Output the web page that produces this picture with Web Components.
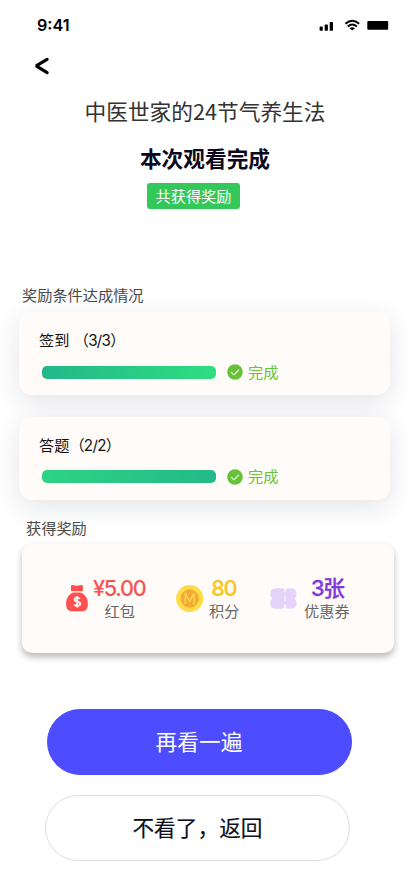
<!DOCTYPE html>
<html lang="zh-CN">
<head>
<meta charset="utf-8">
<title>观看完成</title>
<style>
body{margin:0;background:#fff;font-family:"Inter","Noto Sans CJK SC",sans-serif;font-size:15.2px;color:#111}
</style>
</head>
<body>
<watch-page></watch-page>
<script>
const define = (name, html) => customElements.define(name, class extends HTMLElement {
  constructor() {
    super();
    const t = document.createElement('template');
    t.innerHTML = html;
    this.attachShadow({mode: 'open'}).append(t.content.cloneNode(true));
  }
});

define('status-bar', `
<style>
:host{display:flex;height:50px;box-sizing:border-box;padding:0 19px 0 37px;align-items:center;justify-content:space-between}
.time{font-size:16.2px;font-weight:600;line-height:20px;color:#000}
.icons{display:flex;align-items:center}
svg{display:block}
</style>
<span class="time">9:41</span>
<span class="icons">
<svg width="70" height="14" viewBox="319 18 70 14">
<g fill="#000"><rect x="319.6" y="26.5" width="3.2" height="4.3" rx=".9"/><rect x="324.7" y="24.4" width="3.2" height="6.4" rx=".9"/><rect x="329.7" y="22" width="3.3" height="8.8" rx=".9"/>
<rect x="367.3" y="21" width="20.9" height="8.7" rx="1"/><path d="M349.6 28.2q2.7-1.9 5.4 0l-2.7 2.4z"/></g>
<g fill="none" stroke="#000" stroke-width="2"><path d="M345.4 23.8q6.9-6 13.8 0M347.7 26.5q4.6-3.9 9.2 0"/></g>
</svg></span>`);

define('back-button', `
<style>:host{display:block;height:45px;padding-left:34px}svg{display:block}</style>
<svg width="16" height="32" viewBox="0 0 16 32"><path d="M13.1 9.4 2.2 15.8l10.9 6.8" fill="none" stroke="#000" stroke-width="3.2" stroke-linecap="round" stroke-linejoin="bevel"/></svg>`);

define('page-heading', `
<style>
:host{display:flex;flex-direction:column;align-items:center}
.t{font:400 21.7px/32px "Noto Sans CJK SC",sans-serif;color:#333;padding-left:2px}
.h{font:700 21.7px/32px "Noto Sans CJK SC",sans-serif;color:#0a0920;margin-top:15px;padding-left:2px}
.b{font:400 15.2px/24px "Noto Sans CJK SC",sans-serif;color:#fff;background:#34c759;border-radius:3px;width:93px;height:26px;text-align:center;margin:9px 21px 0 0}
</style>
<div class="t"><slot name="title"></slot></div>
<div class="h"><slot></slot></div>
<div class="b"><slot name="badge"></slot></div>`);

define('section-label', `
<style>:host{display:block;font:400 15.2px/24px "Noto Sans CJK SC",sans-serif;color:#4a4a4a}</style><slot></slot>`);

define('progress-card', `
<style>
:host{display:block;box-sizing:border-box;width:371px;height:83px;margin-left:19px;padding:17px 0 0 20px;background:#fffbf8;border-radius:13px;box-shadow:0 7px 26px rgba(40,50,80,.13)}
.n{line-height:24px;color:#111;white-space:pre;font-size:15.2px}
.r{display:flex;align-items:center;height:24px;margin-top:7px;padding-left:3px;font-family:"Noto Sans CJK SC",sans-serif;color:#67c23a}
.bar{width:173.5px;height:13px;border-radius:5px;background:linear-gradient(90deg,var(--from),var(--to))}
svg{margin:0 5px 0 11.5px}
.r span{line-height:22px;padding-bottom:3px}
</style>
<div class="n"><slot></slot></div>
<div class="r"><div class="bar"></div>
<svg width="16" height="16" viewBox="0 0 16 16"><circle cx="8" cy="8" r="7.8" fill="#67c23a"/><path d="m4.1 8.1 2.8 2.7 5-5" fill="none" stroke="#fff" stroke-width="1.1"/></svg>
<span>完成</span></div>`);

define('reward-item', `
<style>
:host{display:flex;align-items:center}
.c{display:flex;flex-direction:column;align-items:center}
.v{font-size:21.7px;font-weight:500;line-height:24px;letter-spacing:-1.3px;color:var(--c);white-space:nowrap;-webkit-text-stroke:var(--heft,0) var(--c);padding-left:var(--nudge,0)}
.l{font:400 15.2px/20px "Noto Sans CJK SC",sans-serif;color:#666;padding:0 0 2px 1px}
</style>
<slot name="icon"></slot><div class="c"><div class="v"><slot name="value"></slot></div><div class="l"><slot></slot></div></div>`);

define('reward-panel', `
<style>
:host{display:flex;box-sizing:border-box;width:371.5px;height:109px;margin-left:22px;padding:32px 0 0 42.5px;align-items:flex-start;background:#fffbf8;border-radius:10px;box-shadow:0 4px 7px rgba(0,0,0,.28)}
.a{--c:#f65353;width:111px}.b{--c:#f9c61c;width:94.5px;--heft:.2px}.d{--c:#8238dc;--heft:.3px;--nudge:2px}
svg{display:block;flex:none}
</style>
<reward-item class="a">
<svg slot="icon" width="28.5" height="32" viewBox="0 0 28.5 32"><path d="M5.8 4.2Q5.5 1.2 9 2.3q3 .8 6 0 3.3-1 3 1.900l-.3 4H6.200z" fill="#ff5050"/><path d="M8 9.600h7.700c4.500 1.700 7.100 5.900 7.100 11.300 0 5.300-2.400 7.400-6 7.400H7.200c-4 0-6.100-2.200-6.100-7.300 0-5.600 2.600-9.700 6.900-11.400z" fill="#ff5050"/><path d="M14.900 15.800c-.8-1-1.700-1.200-2.800-1.200-1.500 0-2.500.7-2.500 1.900 0 3 5.600 1.300 5.600 4.300 0 1.300-1.100 2.100-2.900 2.100-1.300 0-2.400-.5-3.100-1.300M12.200 13v11.500" fill="none" stroke="#fff" stroke-width="1.8"/></svg>
<span slot="value">¥5.00</span>红包</reward-item>
<reward-item class="b">
<svg slot="icon" width="32.5" height="30" viewBox="0 0 32.5 30"><circle cx="13.7" cy="14.5" r="13.6" fill="#fddc48"/><circle cx="13.7" cy="14.5" r="9.2" fill="#f3ab35"/><path d="M9.3 20V9l4.4 8.4L18.1 9v11" fill="none" stroke="#ffdc56" stroke-width="1.3"/></svg>
<span slot="value">80</span>积分</reward-item>
<reward-item class="d">
<svg slot="icon" width="33" height="28" viewBox="0 0 33 28"><g fill="#e5d3fb" transform="translate(0 -.5)"><rect x=".3" y="4" width="14" height="10.6" rx="4.5"/><rect x=".3" y="13.4" width="14" height="10.6" rx="4.5"/><rect x="2.3" y="9" width="12" height="10"/><rect x="5" y="4" width="9.3" height="20" rx="1.5"/><rect x="15.7" y="4" width="10.8" height="10.6" rx="4.5"/><rect x="15.7" y="13.4" width="10.8" height="10.6" rx="4.5"/><rect x="15.7" y="9" width="8.8" height="10"/><rect x="15.7" y="4" width="6.3" height="20" rx="1.5"/><rect x="14" y="8" width="2" height="3"/><rect x="14" y="16.5" width="2" height="3"/></g></svg>
<span slot="value">3张</span>优惠券</reward-item>`);

define('pill-button', `
<style>
:host{display:block}
button{display:block;box-sizing:border-box;width:305px;height:66px;padding:0 0 3px;border:1px solid var(--line);border-radius:33px;background:var(--fill);color:var(--ink);font:400 21.7px/32px "Noto Sans CJK SC",sans-serif;-webkit-text-stroke:var(--heft) var(--ink)}
</style><button><slot></slot></button>`);

define('watch-page', `
<style>
:host{display:flex;flex-direction:column;width:408px;height:883px;overflow:hidden;background:#fff}
.l1{margin:73px 0 6px 22px}
.p1{--from:#22b78b;--to:#2fde80}
.p2{--from:#2ed383;--to:#24b989;margin-top:21.5px}
.num{letter-spacing:-.7px}
.l2{margin:15px 0 5px 26px}
.again{--fill:#4d4dff;--line:#4d4dff;--ink:#fff;--heft:0;margin:56.5px 0 0 46.5px}
.back{--fill:#fff;--line:#ddd;--ink:#0c1020;--heft:.15px;margin:20px 0 0 45px}
</style>
<status-bar></status-bar>
<back-button></back-button>
<page-heading><span slot="title">中医世家的24节气养生法</span>本次观看完成<span slot="badge">共获得奖励</span></page-heading>
<section-label class="l1">奖励条件达成情况</section-label>
<progress-card class="p1">签到 <span class="num">（3/3）</span></progress-card>
<progress-card class="p2">答题<span class="num">（2/2）</span></progress-card>
<section-label class="l2">获得奖励</section-label>
<reward-panel></reward-panel>
<pill-button class="again">再看一遍</pill-button>
<pill-button class="back">不看了，返回</pill-button>`);
</script>
</body>
</html>
